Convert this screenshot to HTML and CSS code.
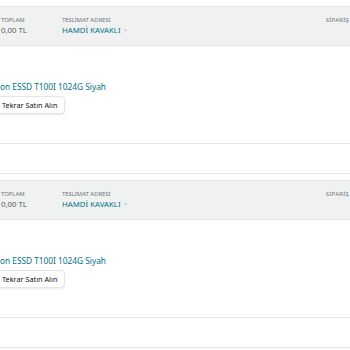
FILE: index.html
```html
<!DOCTYPE html>
<html lang="tr">
<head>
    <meta charset="UTF-8">
    <meta name="viewport" content="width=device-width, initial-scale=1.0">
    <title>Siparişlerim</title>
    <link rel="stylesheet" href="styles.css">
</head>
<body>
    <div id="orders">
        <!-- order 1 -->
        <section class="order">
            <div class="orderHead">
                <div class="headCol totalCol">
                    <span class="headLabel">TOPLAM</span>
                    <span class="headValue">0,00 TL</span>
                </div>
                <div class="headCol">
                    <span class="headLabel">TESLİMAT ADRESİ</span>
                    <span class="headLink">HAMDİ KAVAKLI <span class="chevron">&#8964;</span></span>
                </div>
                <div class="headCol orderNo">
                    <span class="headLabel">SİPARİŞ</span>
                </div>
            </div>
            <div class="orderBody">
                <a href="#" class="productTitle">on ESSD T100I 1024G Siyah</a>
                <button class="buyAgain">Tekrar Satın Alın</button>
            </div>
            <div class="orderFoot"></div>
        </section>

        <!-- order 2 -->
        <section class="order">
            <div class="orderHead">
                <div class="headCol totalCol">
                    <span class="headLabel">TOPLAM</span>
                    <span class="headValue">0,00 TL</span>
                </div>
                <div class="headCol">
                    <span class="headLabel">TESLİMAT ADRESİ</span>
                    <span class="headLink">HAMDİ KAVAKLI <span class="chevron">&#8964;</span></span>
                </div>
                <div class="headCol orderNo">
                    <span class="headLabel">SİPARİŞ</span>
                </div>
            </div>
            <div class="orderBody">
                <a href="#" class="productTitle">on ESSD T100I 1024G Siyah</a>
                <button class="buyAgain">Tekrar Satın Alın</button>
            </div>
            <div class="orderFoot"></div>
        </section>
    </div>
</body>
</html>
```

FILE: styles.css
```css
* {
    box-sizing: border-box;
}
body {
    margin: 0;
    background-color: #fff;
    font-family: "Noto Sans", "Open Sans", sans-serif;
    color: #0f1111;
    overflow: hidden;
}

.order {
    padding-top: 6px;
}

.orderHead {
    display: flex;
    height: 40px;
    padding: 9px 1px 0 1px;
    background-color: #f0f2f2;
    border-top: 1px solid #e3e6e6;
    border-bottom: 1px solid #e3e6e6;
}

.headCol {
    display: flex;
    flex-direction: column;
    gap: 1px;
}

.totalCol {
    width: 61px;
}

.orderNo {
    margin-left: auto;
}

.headLabel {
    font-size: 5.9px;
    line-height: 8px;
    color: #6f7373;
}

.orderNo .headLabel {
    letter-spacing: 0.3px;
}

.headValue {
    font-size: 7.8px;
    line-height: 10px;
    color: #565959;
}

.headLink {
    font-size: 7.8px;
    line-height: 10px;
    color: #007185;
}

.chevron {
    font-size: 6px;
    color: #8d9696;
    position: relative;
    top: -2px;
}

.orderBody {
    display: flex;
    flex-direction: column;
    align-items: flex-start;
    height: 98px;
    padding-top: 35px;
    border-bottom: 1px solid #e3e6e6;
}

.productTitle {
    font-size: 8.3px;
    line-height: 12px;
    color: #007185;
    text-decoration: none;
}

.buyAgain {
    margin-top: 3px;
    margin-left: -6px;
    height: 18px;
    padding: 0 7px 0 7px;
    font-family: inherit;
    font-size: 7.3px;
    color: #0f1111;
    background-color: #fff;
    border: 1px solid #e3e6e6;
    border-radius: 4px;
    box-shadow: 0 1px 2px rgba(213, 217, 217, 0.5);
}

.orderFoot {
    height: 30px;
    border-bottom: 1px solid #e3e6e6;
}
```
